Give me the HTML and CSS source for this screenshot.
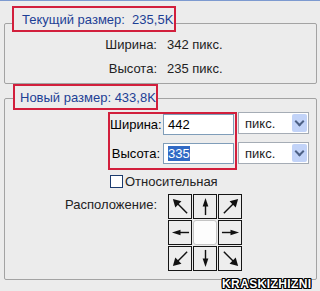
FILE: index.html
```html
<!doctype html>
<html>
<head>
    <meta charset="utf-8"/>
    <title>Размер изображения</title>
    <link rel="stylesheet" href="styles.css">
</head>
<body>
    <div class="dialog">
        <div class="group group-current">
            <div class="title mark">Текущий размер:&nbsp; 235,5K</div>
            <div class="info-row"><span class="label">Ширина:</span><span>342 пикс.</span></div>
            <div class="info-row"><span class="label">Высота:</span><span>235 пикс.</span></div>
        </div>

        <div class="group group-new">
            <div class="title mark">Новый размер: 433,8K</div>

            <div class="size-row">
                <div class="size-box mark">
                    <span class="label">Ширина:</span>
                    <span class="field">442</span>
                    <span class="label">Высота:</span>
                    <span class="field"><span class="selected">335</span></span>
                </div>
                <div class="units">
                    <div class="select"><span>пикс.</span><span class="drop"></span></div>
                    <div class="select"><span>пикс.</span><span class="drop"></span></div>
                </div>
            </div>

            <div class="check-row"><span class="checkbox"></span>Относительная</div>

            <div class="anchor-row">
                <span class="label">Расположение:</span>
                <div class="anchor">
                    <span class="cell"><svg viewBox="0 0 20 20"><path d="M17 17L6 6"/><polygon points="2,2 11,4.5 4.5,11"/></svg></span>
                    <span class="cell"><svg viewBox="0 0 20 20"><path d="M10 19V6"/><polygon points="10,1 13,10 7,10"/></svg></span>
                    <span class="cell"><svg viewBox="0 0 20 20"><path d="M3 17L14 6"/><polygon points="18,2 9,4.5 15.5,11"/></svg></span>
                    <span class="cell"><svg viewBox="0 0 20 20"><path d="M19 10H6"/><polygon points="1,10 10,7 10,13"/></svg></span>
                    <span class="cell center"></span>
                    <span class="cell"><svg viewBox="0 0 20 20"><path d="M1 10H14"/><polygon points="19,10 10,7 10,13"/></svg></span>
                    <span class="cell"><svg viewBox="0 0 20 20"><path d="M17 3L6 14"/><polygon points="2,18 4.5,9 11,15.5"/></svg></span>
                    <span class="cell"><svg viewBox="0 0 20 20"><path d="M10 1V14"/><polygon points="10,19 13,10 7,10"/></svg></span>
                    <span class="cell"><svg viewBox="0 0 20 20"><path d="M3 3L14 14"/><polygon points="18,18 9,15.5 15.5,9"/></svg></span>
                </div>
            </div>
        </div>

        <div class="watermark">KRASKIZHIZNI</div>
    </div>
</body>
</html>
```

FILE: styles.css
```css
*{margin:0;padding:0;box-sizing:border-box;}
body{
    background:#ececec;
    font-family:"Liberation Sans", Arial, sans-serif;
    font-size:13px;
    color:#000;
    border-top:1px solid #7d9ad0;
}
.dialog{
    position:relative;
    height:290px;
    padding-top:22px;
}

/* group boxes */
.group{
    margin:0 3px 0 4px;
    border:1px solid #a3a3a3;
    border-radius:2px;
}
.group-current{
    padding-bottom:3px;
}
.group-new{
    margin-top:14px;
    padding-bottom:8px;
}
.title{
    display:flex;
    align-items:center;
    height:26px;
    background:#ececec;
    color:#1d3f95;
}
.mark{
    border:2px solid #d21f3c;
}
.group-current .title{
    margin:-18px 0 0 7px;
    width:164px;
    padding-left:8px;
}
.group-new .title{
    margin:-15px 0 0 8px;
    width:145px;
    padding-left:5px;
}

/* current size */
.info-row{
    display:flex;
    align-items:center;
    height:24px;
    gap:10px;
    color:#222;
}
.info-row .label{
    width:152px;
    text-align:right;
}

/* new size */
.size-row{
    display:flex;
    margin:2px 0 0 103px;
}
.size-box{
    display:grid;
    grid-template-columns:50px 71px;
    grid-auto-rows:21px;
    row-gap:8px;
    column-gap:3px;
    align-items:center;
    padding:0 1px 4px 0;
}
.size-box .label{
    text-align:right;
}
.field{
    height:21px;
    border:1px solid #7f9db9;
    background:#fff;
    padding:2px 4px;
}
.selected{
    background:#316ac5;
    color:#fff;
}
.units{
    display:flex;
    flex-direction:column;
    gap:8px;
    margin-left:1px;
}
.select{
    display:flex;
    align-items:center;
    justify-content:space-between;
    width:71px;
    height:22px;
    border:1px solid #a5acb5;
    background:#fff;
    padding:0 1px 0 6px;
    color:#222;
}
.drop{
    width:15px;
    height:18px;
    border-radius:2px;
    background:#c2d3f8;
    position:relative;
}
.drop::after{
    content:"";
    position:absolute;
    left:4px;
    top:4px;
    width:5px;
    height:5px;
    border-right:2px solid #4d6185;
    border-bottom:2px solid #4d6185;
    transform:rotate(45deg);
}

.check-row{
    display:flex;
    align-items:center;
    gap:2px;
    height:18px;
    margin:2px 0 0 105px;
    color:#222;
}
.checkbox{
    width:13px;
    height:13px;
    border:1px solid #1c3b6e;
    background:#fff;
}

.anchor-row{
    display:flex;
    gap:11px;
    margin-top:4px;
}
.anchor-row .label{
    width:152px;
    text-align:right;
    padding-top:3px;
    color:#222;
}
.anchor{
    display:grid;
    grid-template-columns:repeat(3,24px);
    grid-template-rows:repeat(3,25px);
    gap:1px;
}
.cell{
    display:flex;
    align-items:center;
    justify-content:center;
    border:1px solid #151515;
    background:#ededed;
}
.cell svg{
    width:19px;
    height:19px;
}
.cell path{
    stroke:#111;
    stroke-width:1.5;
    fill:none;
}
.cell polygon{
    fill:#111;
}
.cell.center{
    background:#fdfdfd;
    border-color:#c4c4c4;
    border-radius:3px;
}

.watermark{
    position:absolute;
    left:222px;
    top:276px;
    font-weight:bold;
    font-size:12px;
    letter-spacing:0.4px;
    color:#fff;
    text-shadow:1px 0 #000,-1px 0 #000,0 1px #000,0 -1px #000,1px 1px #000,-1px -1px #000,1px -1px #000,-1px 1px #000;
}
```
